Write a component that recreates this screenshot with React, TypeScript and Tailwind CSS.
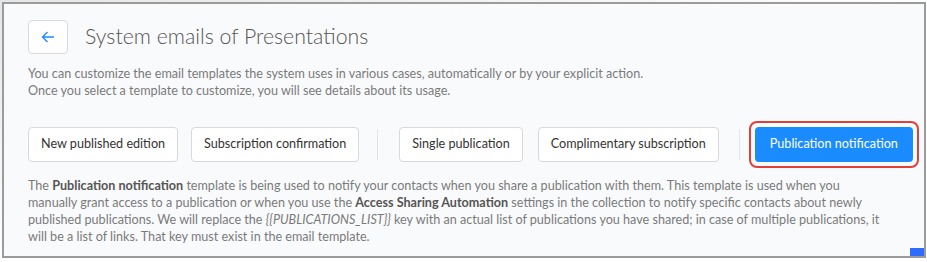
export default function App() {
  const font = { fontFamily: 'Lato, "Open Sans", sans-serif' };
  const btn =
    "shrink-0 whitespace-nowrap h-[35px] px-[12px] rounded-[4px] border border-[#d6d9de] bg-white text-[12.6px] text-[#333]";

  return (
    <div className="w-[927px] h-[262px] bg-gradient-to-br from-[#e6e6e6] via-white to-white pl-[2px] pt-[2px]" style={font}>
      <div className="relative w-[924px] h-[256px] border-2 border-[#9b9b9b] bg-[#f9fafc] px-[24px] pt-[16px] overflow-hidden">
        <div className="flex items-center gap-[17px]">
          <button className="w-[40px] h-[34px] rounded-[4px] border border-[#d9dbe0] bg-white flex items-center justify-center">
            <svg width="14" height="12" viewBox="0 0 14 12" fill="none" stroke="#1e8cff" strokeWidth="1.4">
              <path d="M13 6H1.5M6.5 1L1.5 6l5 5" />
            </svg>
          </button>
          <h1 className="text-[21.3px] font-light text-[#555] leading-none">System emails of Presentations</h1>
        </div>

        <p className="mt-[11px] text-[12.6px] leading-[17px] text-[#7a7a7a]">
          You can customize the email templates the system uses in various cases, automatically or by your explicit action.
          <br />
          Once you select a template to customize, you will see details about its usage.
        </p>

        <div className="mt-[28px] flex items-center">
          <button className={btn}>New published edition</button>
          <button className={btn + " ml-[13px]"}>Subscription confirmation</button>
          <div className="shrink-0 mx-[18px] w-px h-[31px] bg-[#e2e4e8]" />
          <button className={btn + " ml-[3px]"}>Single publication</button>
          <button className={btn + " ml-[15px]"}>Complimentary subscription</button>
          <div className="shrink-0 ml-[20px] mr-[9px] w-px h-[31px] bg-[#e2e4e8]" />
          <div className="shrink-0 rounded-[8px] border-2 border-[#e0403a] p-[4px] -my-[6px]">
            <button className="whitespace-nowrap h-[35px] px-[15px] rounded-[4px] bg-[#1a8cff] text-[12.6px] text-white">
              Publication notification
            </button>
          </div>
        </div>

        <p className="mt-[15px] w-[860px] text-[12.6px] leading-[17px] text-[#7a7a7a]">
          The <b className="text-[#555]">Publication notification</b> template is being used to notify your contacts when you share a publication with them. This template is used when you manually grant access to a publication or when you use the <b className="text-[#555]">Access Sharing Automation</b> settings in the collection to notify specific contacts about newly published publications. We will replace the <i>{"{{PUBLICATIONS_LIST}}"}</i> key with an actual list of publications you have shared; in case of multiple publications, it will be a list of links. That key must exist in the email template.
        </p>

        <div className="absolute right-0 bottom-0 w-[14px] h-[8px] bg-[#2f6bff]" />
      </div>
    </div>
  );
}
